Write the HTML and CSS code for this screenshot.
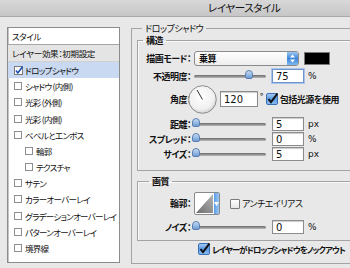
FILE: index.html
```html
<!DOCTYPE html>
<html lang="ja">
  <head>
    <meta charset="UTF-8" />
    <title>レイヤースタイル</title>
    <link rel="stylesheet" href="styles.css">
  </head>
  <body>
    <div class="titlebar">レイヤースタイル</div>

    <div class="dialog">
      <div class="sidebar">
        <div class="side-head">スタイル</div>
        <div class="side-item default">レイヤー効果：初期設定</div>
        <div class="side-item selected">
          <svg class="cb-check" width="9" height="9" viewBox="0 0 9 9">
            <rect x="0.5" y="0.5" width="8" height="8" fill="#fff" stroke="#7a7a7a" />
            <path d="M2 4.5 L3.8 7 L8.5 0.8" fill="none" stroke="#1b4fb0" stroke-width="1.6" />
          </svg>
          ドロップシャドウ
        </div>
        <div class="side-item"><span class="cb"></span>シャドウ (内側)</div>
        <div class="side-item"><span class="cb"></span>光彩 (外側)</div>
        <div class="side-item"><span class="cb"></span>光彩 (内側)</div>
        <div class="side-item"><span class="cb"></span>ベベルとエンボス</div>
        <div class="side-item sub"><span class="cb"></span>輪郭</div>
        <div class="side-item sub"><span class="cb"></span>テクスチャ</div>
        <div class="side-item"><span class="cb"></span>サテン</div>
        <div class="side-item"><span class="cb"></span>カラーオーバーレイ</div>
        <div class="side-item"><span class="cb"></span>グラデーションオーバーレイ</div>
        <div class="side-item"><span class="cb"></span>パターンオーバーレイ</div>
        <div class="side-item"><span class="cb"></span>境界線</div>
      </div>

      <fieldset class="group outer">
        <legend>ドロップシャドウ</legend>

        <fieldset class="group structure">
          <legend>構造</legend>

          <div class="row mode-row">
            <label class="lbl">描画モード：</label>
            <div class="popup">
              <span>乗算</span>
              <span class="popup-btn">
                <svg width="5" height="9" viewBox="0 0 5 9">
                  <path d="M0 3.5 L2.5 0.5 L5 3.5 Z M0 5.5 L2.5 8.5 L5 5.5 Z" fill="#fff" />
                </svg>
              </span>
            </div>
            <span class="swatch"></span>
          </div>

          <div class="row opacity-row">
            <label class="lbl">不透明度：</label>
            <div class="slider"><span class="thumb" style="left: 51px"></span></div>
            <input class="num focused" value="75" />
            <span class="unit">%</span>
          </div>

          <div class="row angle-row">
            <label class="lbl">角度：</label>
            <svg class="dial" width="29" height="29" viewBox="0 0 29 29">
              <defs>
                <radialGradient id="dialFill" cx="0.45" cy="0.4" r="0.65">
                  <stop offset="0" stop-color="#ffffff" />
                  <stop offset="0.7" stop-color="#f0f0f0" />
                  <stop offset="1" stop-color="#c8c8c8" />
                </radialGradient>
              </defs>
              <circle cx="14.5" cy="14.5" r="13.8" fill="url(#dialFill)" stroke="#8c8c8c" />
              <line x1="14.5" y1="14.5" x2="9" y2="5" stroke="#333" stroke-width="1" />
            </svg>
            <input class="num wide" value="120" />
            <span class="deg">°</span>
            <svg class="aqua-check" width="12" height="12" viewBox="0 0 12 12">
              <defs>
                <linearGradient id="aquaFill" x1="0" y1="0" x2="0" y2="1">
                  <stop offset="0" stop-color="#a9cdf5" />
                  <stop offset="0.5" stop-color="#5a9ae6" />
                  <stop offset="1" stop-color="#8dc0f4" />
                </linearGradient>
              </defs>
              <rect x="0.5" y="0.5" width="11" height="11" rx="1.5" fill="url(#aquaFill)" stroke="#3b6fb4" />
              <path d="M2.5 6 L5 9.2 L11.5 0.5" fill="none" stroke="#111" stroke-width="2" />
            </svg>
            <span class="chk-label bold">包括光源を使用</span>
          </div>

          <div class="row">
            <label class="lbl">距離：</label>
            <div class="slider"><span class="thumb" style="left: -2px"></span></div>
            <input class="num" value="5" />
            <span class="unit">px</span>
          </div>

          <div class="row">
            <label class="lbl">スプレッド：</label>
            <div class="slider"><span class="thumb" style="left: -2px"></span></div>
            <input class="num" value="0" />
            <span class="unit">%</span>
          </div>

          <div class="row">
            <label class="lbl">サイズ：</label>
            <div class="slider"><span class="thumb" style="left: -2px"></span></div>
            <input class="num" value="5" />
            <span class="unit">px</span>
          </div>
        </fieldset>

        <fieldset class="group quality">
          <legend>画質</legend>

          <div class="row contour-row">
            <label class="lbl">輪郭：</label>
            <div class="contour">
              <svg width="19" height="21" viewBox="0 0 19 21">
                <defs>
                  <linearGradient id="contourFill" x1="0" y1="1" x2="1" y2="0">
                    <stop offset="0" stop-color="#6e6e6e" />
                    <stop offset="1" stop-color="#b4b4b4" />
                  </linearGradient>
                </defs>
                <path d="M1 20 L18 1 L18 20 Z" fill="url(#contourFill)" />
              </svg>
              <span class="contour-btn">
                <svg width="5" height="4" viewBox="0 0 5 4"><path d="M0 0 L5 0 L2.5 4 Z" fill="#fff" /></svg>
              </span>
            </div>
            <span class="cb-plain"></span>
            <span class="chk-label">アンチエイリアス</span>
          </div>

          <div class="row">
            <label class="lbl">ノイズ：</label>
            <div class="slider"><span class="thumb" style="left: -2px"></span></div>
            <input class="num" value="0" />
            <span class="unit">%</span>
          </div>
        </fieldset>

        <div class="knockout">
          <svg class="aqua-check" width="12" height="12" viewBox="0 0 12 12">
            <rect x="0.5" y="0.5" width="11" height="11" rx="1.5" fill="url(#aquaFill)" stroke="#3b6fb4" />
            <path d="M2.5 6 L5 9.2 L11.5 0.5" fill="none" stroke="#111" stroke-width="2" />
          </svg>
          <span class="chk-label bold">レイヤーがドロップシャドウをノックアウト</span>
        </div>
      </fieldset>
    </div>
  </body>
</html>
```

FILE: styles.css
```css
* {
  box-sizing: border-box;
}

body {
  margin: 0;
  width: 350px;
  height: 268px;
  overflow: hidden;
  background-color: #e8e8e8;
  font-family: "Noto Sans CJK JP", sans-serif;
  font-size: 9px;
  letter-spacing: -0.5px;
  font-feature-settings: "palt";
  color: #111;
}

.titlebar {
  height: 17px;
  padding-left: 208px;
  background: linear-gradient(#d8d8d8, #c6c6c6);
  border-bottom: 1px solid #a9a9a9;
  font-size: 10.5px;
  letter-spacing: -0.4px;
  line-height: 16px;
  white-space: nowrap;
}

.dialog {
  display: flex;
  align-items: flex-start;
  padding: 6px 0 0 7px;
}

/* left style list */
.sidebar {
  flex: none;
  width: 113px;
  height: 236px;
  margin-top: 4px;
  background-color: #fff;
  border: 1px solid #8c8c8c;
  box-shadow: inset 1px 0 0 #c4c4c4;
  font-size: 8.5px;
  letter-spacing: -0.7px;
}

.side-head {
  height: 17px;
  line-height: 16px;
  padding-left: 4px;
  border-bottom: 1px solid #a6a6a6;
  letter-spacing: -0.4px;
}

.side-item {
  display: flex;
  align-items: center;
  height: 16.18px;
  padding-left: 6px;
  white-space: nowrap;
}

.side-item.default {
  height: 17px;
  padding-left: 4px;
  background-color: #e4e4e4;
  border-bottom: 1px solid #d0d0d0;
  letter-spacing: -0.3px;
}

.side-item.selected {
  background-color: #c8d9f1;
}

.side-item.sub {
  padding-left: 17px;
}

.cb {
  flex: none;
  width: 8px;
  height: 8px;
  margin-right: 3px;
  background-color: #fff;
  border: 1px solid #8e8e8e;
}

.cb-check {
  flex: none;
  margin-right: 2px;
}

/* right panel group boxes */
.group {
  margin: 0;
  border: 1px solid #a4a4a4;
  box-shadow: inset 1px 1px 0 #f8f8f8;
}

.group legend {
  padding: 0 3px;
  line-height: 11px;
  font-weight: 700;
}

.outer {
  flex: none;
  width: 260px;
  height: 241px;
  margin-left: 11px;
  padding: 0 0 0 5px;
  box-shadow: none;
}

.outer > legend {
  margin-left: 5px;
  font-weight: 400;
}

.structure {
  width: 250px;
  margin-top: 1px;
  padding: 4px 0 9px 0;
}

.structure > legend {
  margin-left: 5px;
}

.quality {
  width: 250px;
  margin-top: 5px;
  padding: 5px 0 6px 0;
}

.quality > legend {
  margin-left: 11px;
}

.row {
  display: flex;
  align-items: center;
  height: 14px;
  margin-top: 1px;
}

.lbl {
  flex: none;
  width: 53px;
  text-align: right;
  font-weight: 700;
  white-space: nowrap;
  margin-right: 3px;
}

.mode-row {
  height: 16px;
  margin-top: 0;
}

.opacity-row {
  margin-top: 3px;
}

.angle-row {
  height: 30px;
  margin-top: 1px;
  margin-bottom: 3px;
}

.contour-row {
  height: 23px;
  margin-top: 0;
  margin-bottom: 5px;
}

.popup {
  display: flex;
  align-items: center;
  justify-content: space-between;
  width: 105px;
  height: 15px;
  padding-left: 4px;
  background: linear-gradient(#ffffff, #eeeeee);
  border: 1px solid #8a8a8a;
  border-radius: 3px;
  font-weight: 700;
}

.popup-btn {
  display: flex;
  align-items: center;
  justify-content: center;
  width: 11px;
  height: 13px;
  background: linear-gradient(#9cc6f3, #3f86dc 50%, #7fb6ef);
  border-radius: 0 2px 2px 0;
}

.swatch {
  width: 26px;
  height: 13px;
  margin-left: 5px;
  background-color: #000;
  border: 1px solid #7a7a7a;
}

.slider {
  position: relative;
  flex: none;
  width: 72px;
  height: 3px;
  margin-right: 6px;
  background: linear-gradient(#6a6a6a, #b8b8b8);
  border-radius: 2px;
}

.thumb {
  position: absolute;
  top: -5px;
  width: 8px;
  height: 9px;
  background: linear-gradient(#c6dbf4, #6e9dd6);
  border: 1px solid #5c7fae;
  border-radius: 4px 4px 2px 2px;
}

.num {
  width: 32px;
  height: 14px;
  padding: 0 0 0 3px;
  background-color: #fff;
  border: 1px solid #8c8c8c;
  box-shadow: inset 0 1px 1px rgba(0, 0, 0, 0.2);
  font-family: "DejaVu Sans", sans-serif;
  font-size: 10px;
  letter-spacing: 0;
  color: #111;
}

.num.focused {
  border-color: #6f95cf;
  box-shadow: 0 0 0 1px #a9c4ea;
}

.num.wide {
  width: 38px;
  height: 16px;
  margin-left: 3px;
}

.unit {
  margin-left: 4px;
  font-family: "DejaVu Sans", sans-serif;
  font-size: 9px;
  letter-spacing: 0;
}

.deg {
  align-self: flex-start;
  margin: 6px 3px 0 2px;
  font-size: 9px;
}

.dial {
  flex: none;
  margin-left: -6px;
}

.chk-label {
  margin-left: 2px;
  white-space: nowrap;
}

.bold {
  font-weight: 700;
}

.contour {
  display: flex;
  width: 26px;
  height: 23px;
  background-color: #fff;
  border: 1px solid #8a8a8a;
  border-radius: 2px;
}

.contour svg {
  flex: none;
}

.contour-btn {
  display: flex;
  align-items: center;
  justify-content: center;
  width: 6px;
  background: linear-gradient(90deg, #5d9de6, #9cc8f5);
}

.cb-plain {
  width: 10px;
  height: 10px;
  margin-left: 10px;
  background: linear-gradient(#ffffff, #e8e8e8);
  border: 1px solid #7c7c7c;
  border-radius: 1px;
}

.knockout {
  display: flex;
  align-items: center;
  height: 14px;
  margin: 1px 0 0 61px;
}

.knockout .chk-label {
  font-size: 8.3px;
  letter-spacing: -0.9px;
}
```
